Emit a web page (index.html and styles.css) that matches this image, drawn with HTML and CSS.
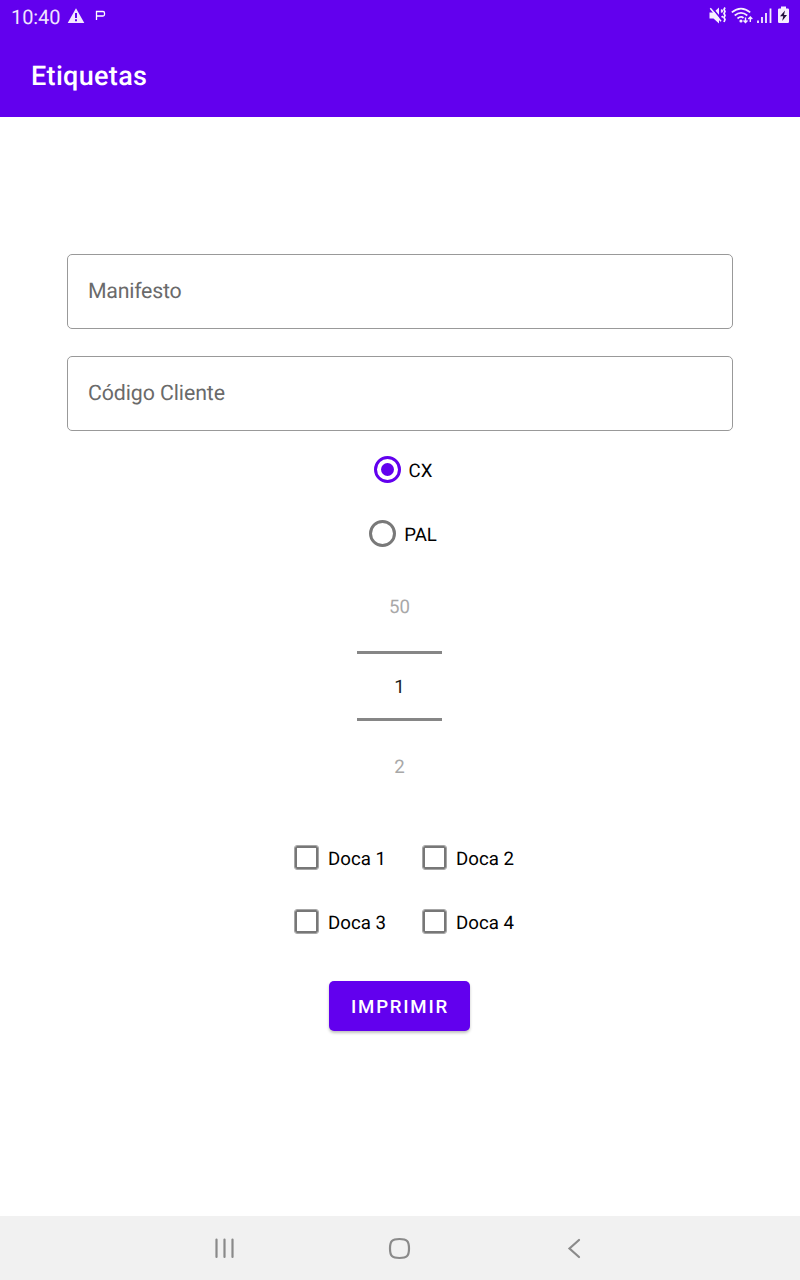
FILE: index.html
```html
<!DOCTYPE html>
<html lang="pt">
<head>
<meta charset="utf-8">
<title>Etiquetas</title>
<link rel="stylesheet" href="styles.css">
</head>
<body>
<div class="screen">
  <header class="header">
    <div class="status">
      <span class="clock">10:40</span>
      <svg class="status-left" width="42" height="32" viewBox="66 0 42 32">
        <path d="M76 8.200 84.300 23H67.700Z" fill="#f3e8ff"/>
        <path d="M76 13v5M76 19.300v2" stroke="#6200ee" stroke-width="2"/>
        <path d="M96.500 20v-8.500h6.500q1.500 0 1.500 1.500v1.500q0 1.500-1.500 1.500h-6.500" fill="none" stroke="#fff" stroke-width="1.300"/>
      </svg>
      <svg class="status-right" width="92" height="32" viewBox="708 0 92 32" fill="none" stroke="#f6eeff">
        <path d="M709.500 12.500h4l5.500-5v16l-5.500-5h-4z" fill="#f6eeff" stroke="none"/>
        <path d="M711.800 7.500l9 11" stroke="#6200ee" stroke-width="1.800"/>
        <path d="M710.300 8.300l10.700 13" stroke-width="1.500"/>
        <path d="M721.300 9.500l1 1.500-1 1.500M721.800 16l1 1.500M725 7.500l-1 2 1 2-1 2 1 2-1 2 1 2-1 2.500" stroke-width="1.700"/>
        <path d="M731.800 12.300q9.200-7.500 18.400 0M734.700 15.500q6.300-5.300 12.600 0M737.500 18.500q3.500-2.800 6 -.5" stroke-width="1.700"/>
        <circle cx="741" cy="21" r="1.600" fill="#f6eeff" stroke="none"/>
        <path d="M745.500 17.500v5M743.500 20.500l2 2 2-2M750.300 22v-5M748.300 19l2-2 2 2" stroke-width="1.400"/>
        <path d="M758 20.500V23M762 17v6M766 13v10M770.500 8.500V23" stroke-width="1.800"/>
        <path d="M781 6.500h5v2h1.800q1.200 0 1.200 1.200v12.100q0 1.200-1.200 1.200h-8.600q-1.200 0-1.200-1.200V9.700q0-1.200 1.200-1.200h1.800z" fill="#f6eeff" stroke="none"/>
        <path d="M785 10.500l-5 5.700h3.200l-1 4.800 4.800-6h-3z" fill="#24113f" stroke="none"/>
      </svg>
    </div>
    <h1 class="title">Etiquetas</h1>
  </header>

  <main class="form">
    <div class="field">Manifesto</div>
    <div class="field client">Código Cliente</div>

    <div class="radios">
      <div class="radio checked"><span class="ring"></span><span class="label">CX</span></div>
      <div class="radio"><span class="ring"></span><span class="label">PAL</span></div>
    </div>

    <div class="picker">
      <div class="number faded">50</div>
      <div class="number current">1</div>
      <div class="number faded">2</div>
    </div>

    <div class="checks">
      <div class="check"><span class="box"></span><span class="label">Doca 1</span></div>
      <div class="check"><span class="box"></span><span class="label">Doca 2</span></div>
      <div class="check"><span class="box"></span><span class="label">Doca 3</span></div>
      <div class="check"><span class="box"></span><span class="label">Doca 4</span></div>
    </div>

    <button class="print">IMPRIMIR</button>
  </main>

  <nav class="nav">
    <svg width="24" height="24" viewBox="0 0 24 24"><path d="M4.500 3.500v17.500M12.500 3.500v17.500M20.500 3.500v17.500"/></svg>
    <svg width="24" height="24" viewBox="0 0 24 24"><path d="M12.500 3C20 3 22 5 22 12.500S20 22 12.500 22 3 20 3 12.500 5 3 12.500 3Z"/></svg>
    <svg width="24" height="24" viewBox="0 0 24 24"><path d="M17 4 7.500 12.500 17 21"/></svg>
  </nav>
</div>
</body>
</html>
```
FILE: styles.css
```css
* { box-sizing: border-box; }
body {
  margin: 0;
  background: #fff;
  font-family: Roboto, "Liberation Sans", sans-serif;
  color: #000;
  text-rendering: geometricPrecision;
}
.screen {
  display: flex;
  flex-direction: column;
  height: 1280px;
}
.header {
  height: 117px;
  background: #6200ee;
  color: #fff;
}
.status {
  display: flex;
  height: 32px;
  padding-left: 11px;
}
.clock {
  width: 55px;
  font-size: 20px;
  line-height: 34px;
  letter-spacing: -0.1px;
  color: #f0e4ff;
}
.status-right { margin-left: auto; }
.title {
  margin: 0;
  padding-left: 31px;
  font-size: 27px;
  font-weight: 500;
  line-height: 88px;
  letter-spacing: 0.33px;
}
.form {
  flex: 1;
  display: flex;
  flex-direction: column;
  align-items: center;
  padding: 137px 67px 0;
}
.field {
  width: 100%;
  height: 75px;
  margin-bottom: 27px;
  padding: 1px 0 0 20px;
  border: 1px solid #999;
  border-radius: 5px;
  font-size: 21.33px;
  line-height: 71px;
  letter-spacing: -0.25px;
  color: #6a6a6a;
}
.client { letter-spacing: -0.1px; }
.radios {
  margin-top: -20px;
  padding-left: 6px;
  font-size: 18.67px;
}
.radio {
  display: flex;
  align-items: center;
  justify-content: center;
  gap: 8px;
  height: 64px;
}
.label { padding-top: 2px; }
.ring {
  display: flex;
  align-items: center;
  justify-content: center;
  width: 27px;
  height: 27px;
  margin-top: -1px;
  border: 3px solid #797979;
  border-radius: 50%;
}
.checked .ring { border-color: #6200ee; }
.checked .ring::after {
  content: "";
  width: 13px;
  height: 13px;
  border-radius: 50%;
  background: #6200ee;
}
.picker {
  width: 85px;
  padding-top: 1px;
  margin-right: 1px;
  font-size: 18.67px;
  text-align: center;
}
.number { height: 84px; line-height: 80px; }
.faded { color: #a8a8a8; }
.current {
  height: 70px;
  border-top: 3px solid #868686;
  border-bottom: 3px solid #868686;
  line-height: 67px;
  color: #222;
}
.current + .faded { line-height: 92px; }
.checks {
  display: grid;
  grid-template-columns: 128px 128px;
  grid-auto-rows: 64px;
  width: 256px;
  margin-top: 21px;
  margin-left: 44px;
  font-size: 18.67px;
}
.check {
  display: flex;
  align-items: center;
  gap: 9px;
}
.box {
  width: 25px;
  height: 25px;
  margin-top: -1px;
  border: 1px solid #a6a6a6;
  border-radius: 3px;
  box-shadow: inset 0 0 0 2px #777;
}
.print {
  width: 141px;
  height: 50px;
  margin-top: 27px;
  margin-right: 1px;
  padding: 2px 0 0 1px;
  border: 0;
  border-radius: 5px;
  background: #6200ee;
  box-shadow: 0 2px 3px rgba(0, 0, 0, 0.25);
  color: #fff;
  font-family: inherit;
  font-size: 18.67px;
  font-weight: 500;
  letter-spacing: 1.75px;
}
.nav {
  display: flex;
  justify-content: center;
  align-items: center;
  gap: 151px;
  height: 64px;
  padding-right: 3px;
  background: #f1f1f1;
}
.nav path {
  fill: none;
  stroke: #8a8a8a;
  stroke-width: 2.200;
  stroke-linecap: round;
}
```
